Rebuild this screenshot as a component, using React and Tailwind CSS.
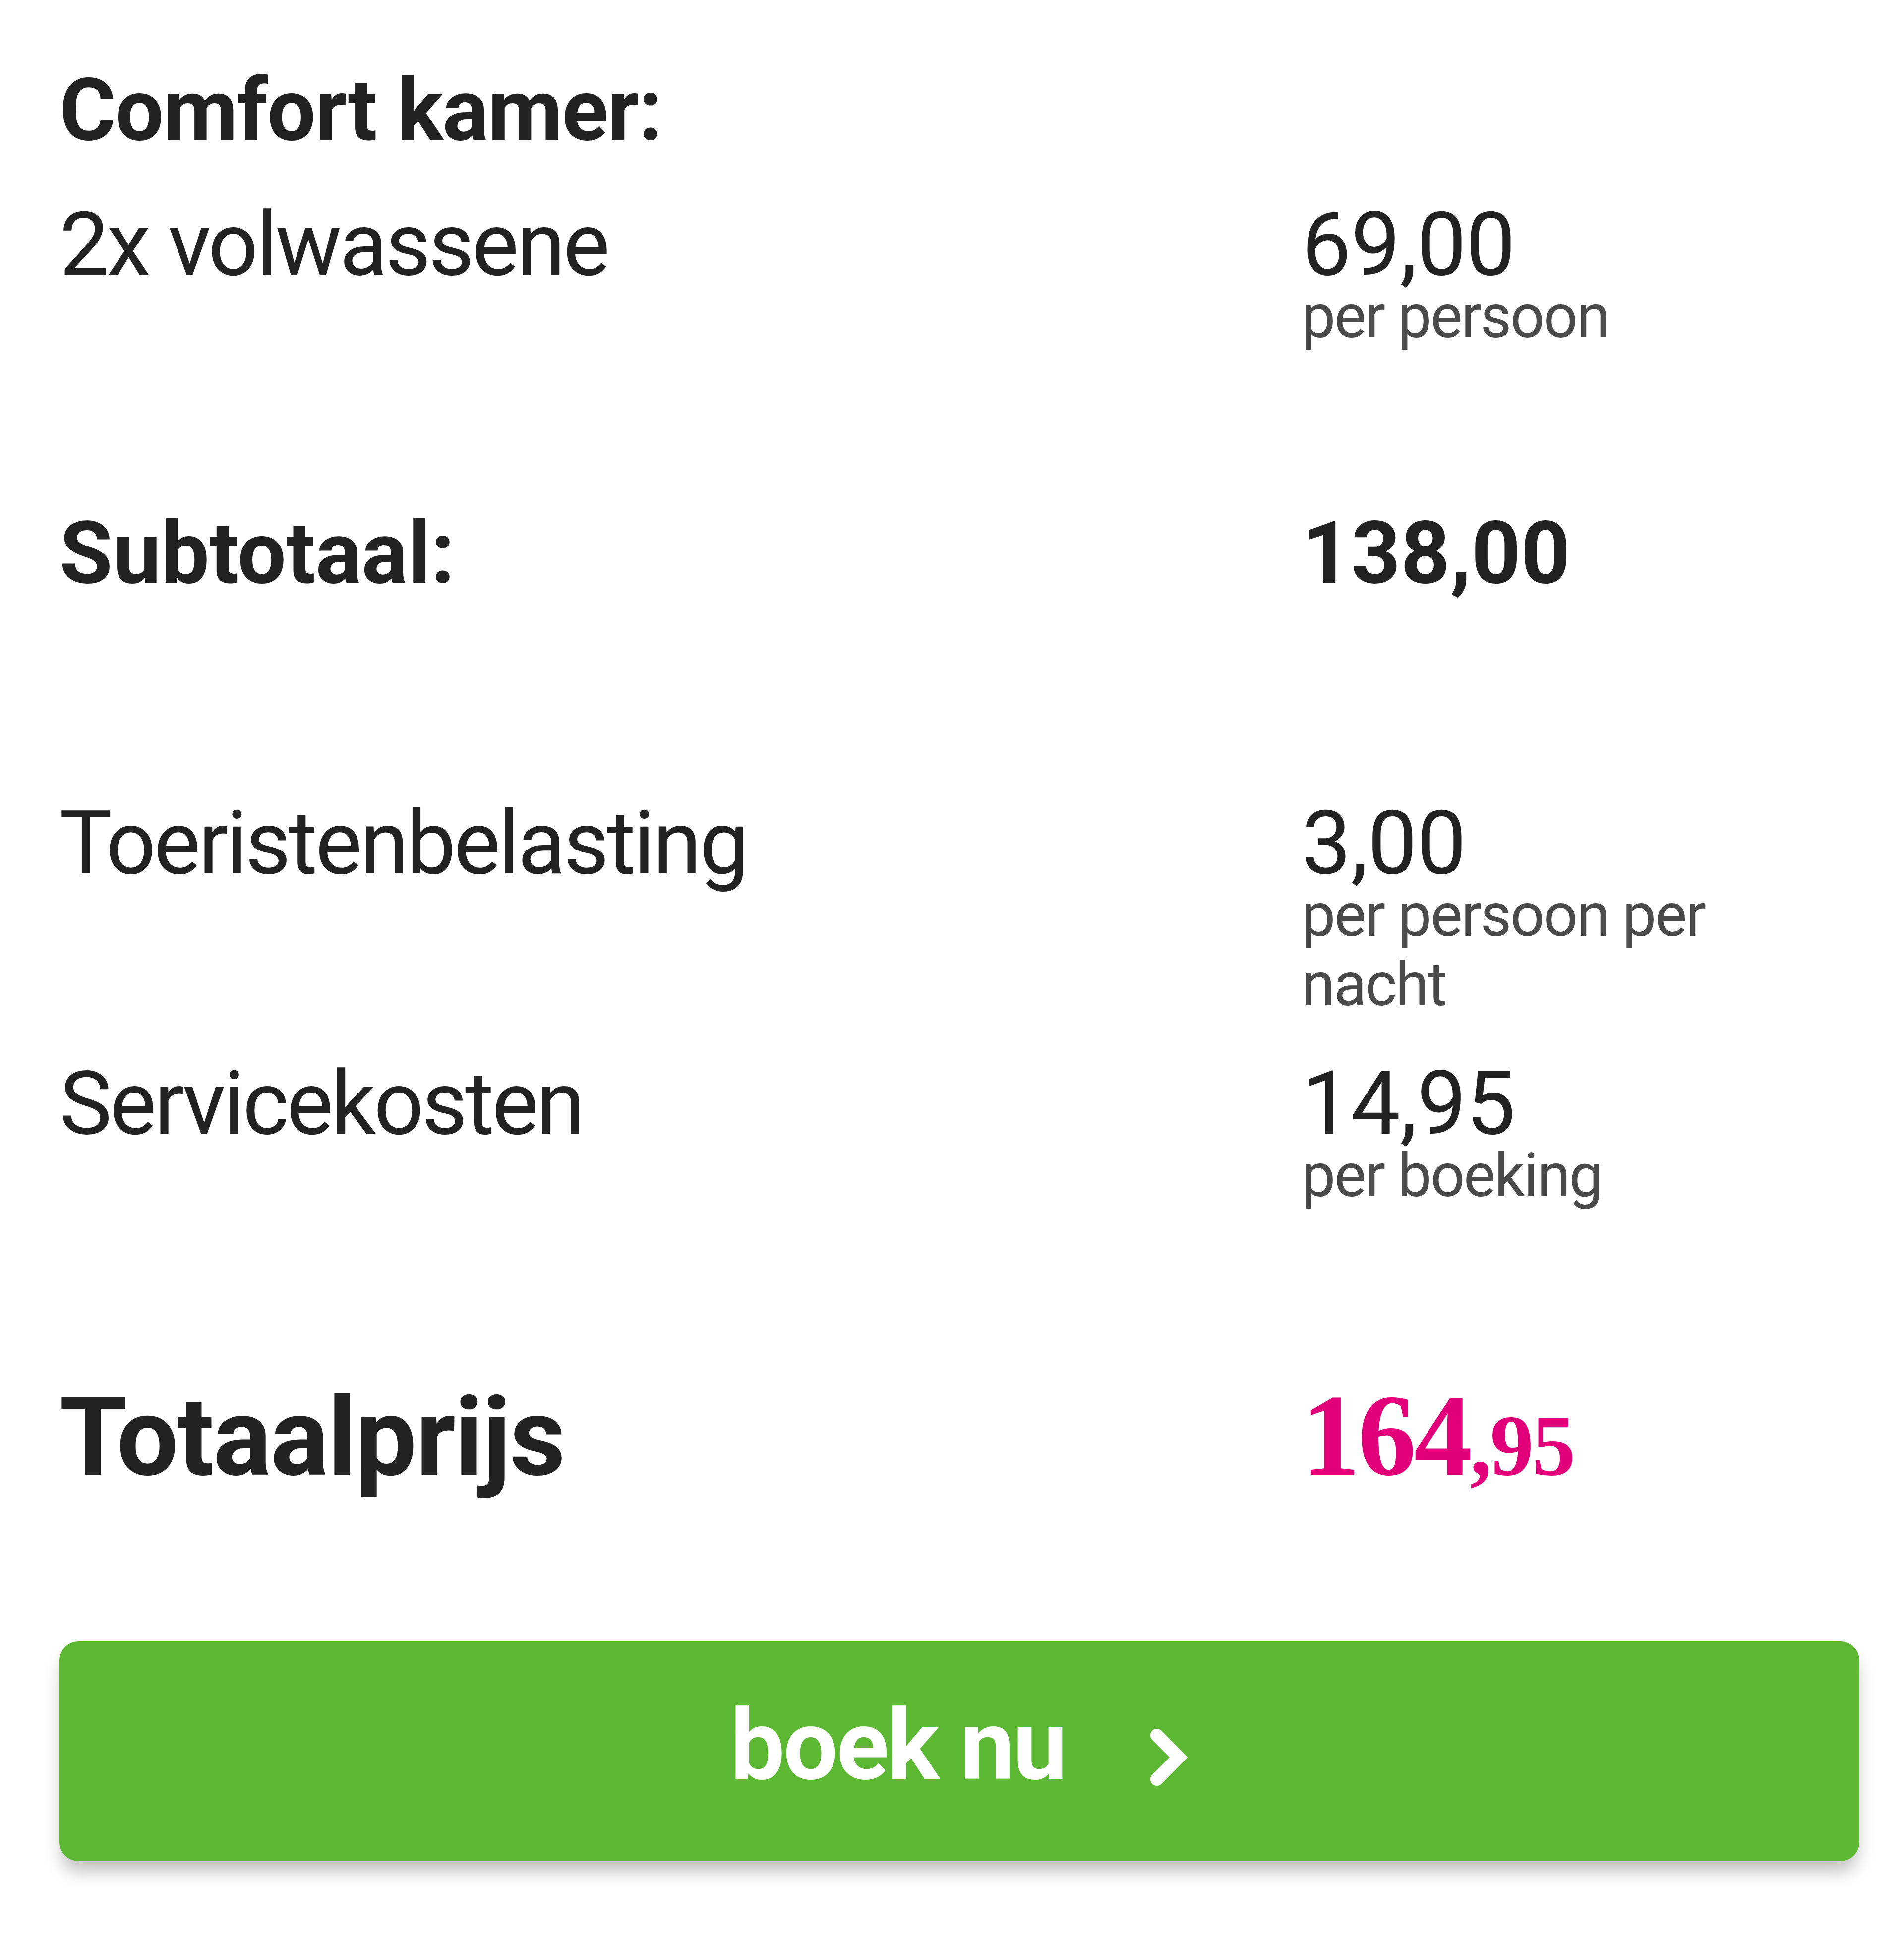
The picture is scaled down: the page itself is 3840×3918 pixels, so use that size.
import React from 'react';

const sans = "font-['Roboto',sans-serif]";

/* ── Price row ── */
function PriceRow({ label, price, sub, bold, className = '' }) {
  const labelCls = bold ? 'font-bold text-[174px]' : 'text-[178px] tracking-[-0.025em]';
  const priceCls = bold ? 'font-bold text-[174px]' : 'text-[178px] tracking-[-0.005em]';
  return (
    <div className={`grid grid-cols-[2505px_1fr] items-baseline ${className}`}>
      <div className={`${labelCls} leading-[151px]`}>{label}</div>
      <div>
        <div className={`${priceCls} leading-[151px]`}>{price}</div>
        {sub && (
          <div className="max-w-[1000px] text-[122px] leading-[140px] tracking-[-0.022em] text-[#4a4a4a]">{sub}</div>
        )}
      </div>
    </div>
  );
}

function Chevron() {
  return (
    <svg viewBox="0 0 80 115" className="ml-[168px] mt-[48px] h-[115px] w-[80px]" fill="none">
      <polyline
        points="16,13 60,57.5 16,102"
        stroke="#ffffff"
        strokeWidth="26"
        strokeLinecap="round"
        strokeLinejoin="miter"
      />
    </svg>
  );
}

export default function App() {
  return (
    <div className={`${sans} h-[3918px] w-[3840px] bg-white pl-[120px] pr-[90px] pt-[113px] text-[#222222]`}>
      <h2 className="text-[174px] font-bold leading-[220px] tracking-[-0.009em]">Comfort kamer:</h2>

      <PriceRow className="mt-[85px]" label="2x volwassene" price="69,00" sub="per persoon" />
      <PriceRow className="mt-[331px]" label="Subtotaal:" price="138,00" bold />
      <PriceRow className="mt-[434px]" label="Toeristenbelasting" price="3,00" sub="per persoon per nacht" />
      <PriceRow className="mt-[94px]" label="Servicekosten" price="14,95" sub="per boeking" />

      {/* Total */}
      <div className="mt-[344px] grid grid-cols-[2505px_1fr] items-baseline">
        <div className="text-[220px] font-bold leading-[220px] tracking-[-0.01em]">Totaalprijs</div>
        <div className="font-['Liberation_Serif',serif] font-bold leading-[220px] text-[#e2007a]">
          <span className="text-[236px] tracking-[-0.02em]">164</span>
          <span className="text-[176px] tracking-[-0.02em]">,95</span>
        </div>
      </div>

      <button
        type="button"
        className="mt-[231px] flex h-[443px] w-full items-center justify-center rounded-[38px] bg-[#5cb833] pb-[24px] text-white shadow-[0_25px_35px_-5px_rgba(0,0,0,0.25)]"
      >
        <span className="text-[196px] font-bold leading-[200px] tracking-[-0.017em]">boek nu</span>
        <Chevron />
      </button>
    </div>
  );
}
